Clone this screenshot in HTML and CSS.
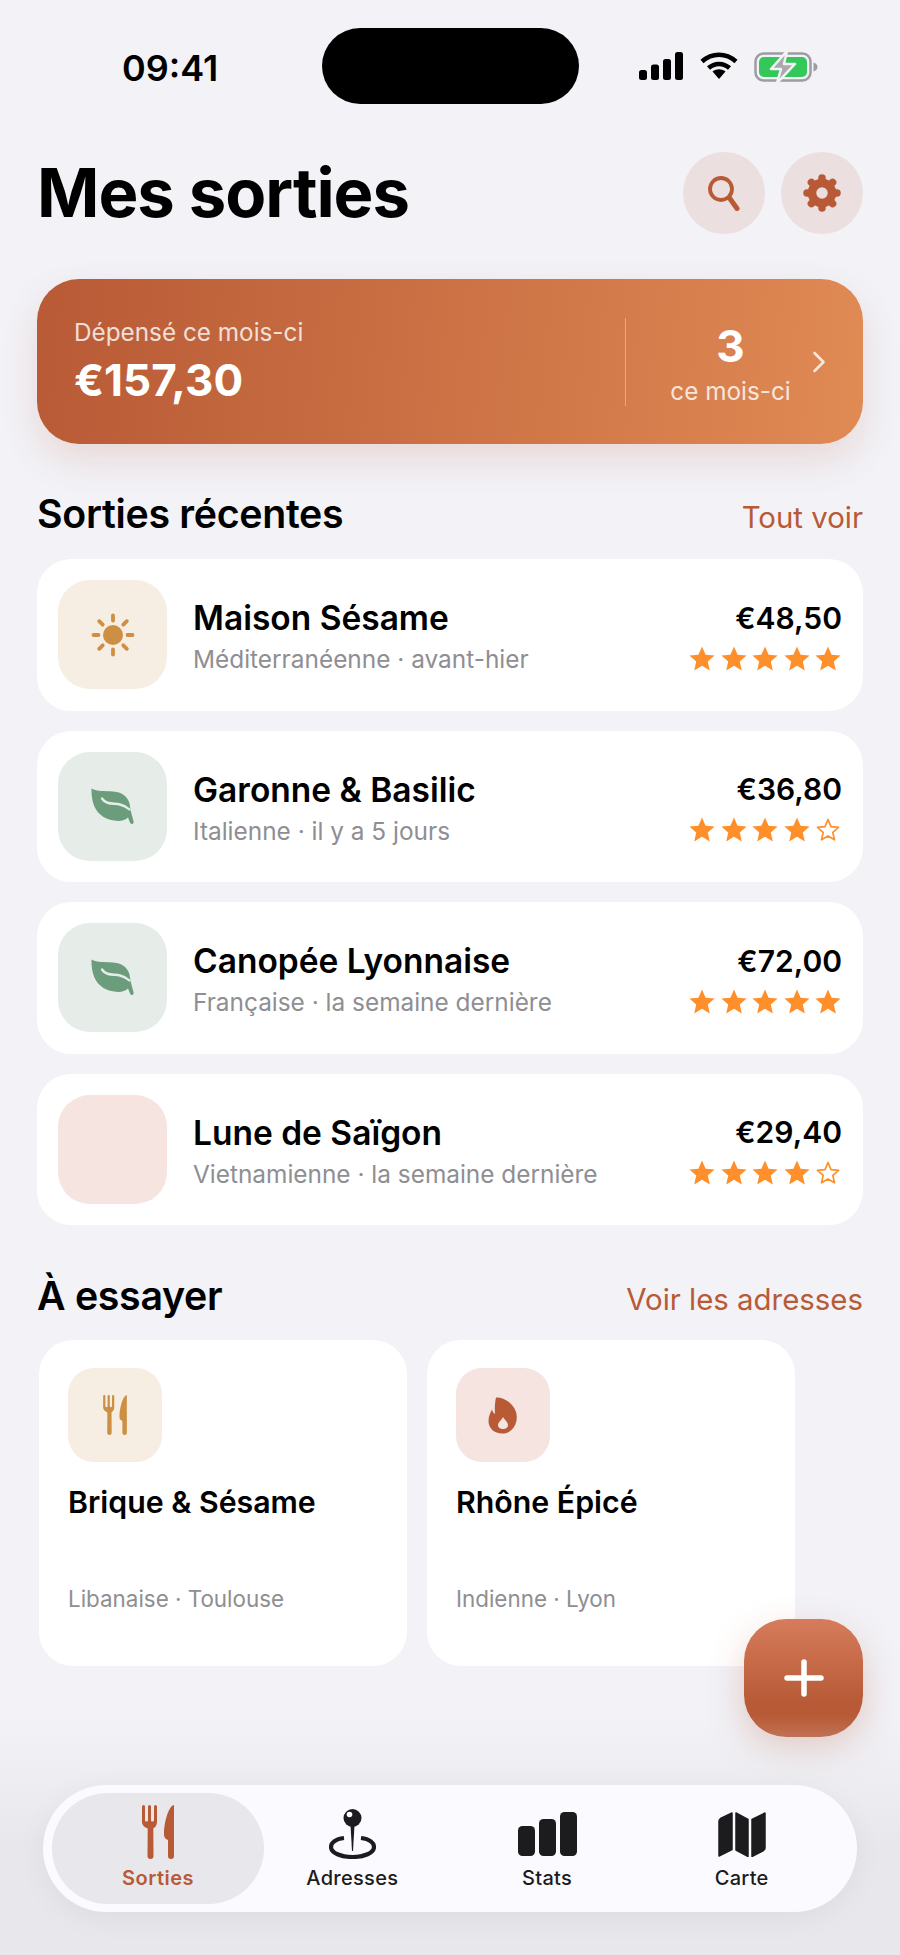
FILE: index.html
```html
<!DOCTYPE html>
<html lang="fr">
<head>
    <meta charset="UTF-8">
    <meta name="viewport" content="width=device-width, initial-scale=1.0">
    <title>Mes sorties</title>
    <link rel="stylesheet" href="styles.css">
</head>
<body>
    <svg class="defs" width="0" height="0">
        <symbol id="star" viewBox="0 0 26 25">
            <polygon points="13,0.5 16.6,8.8 25.6,9.6 18.8,15.5 20.8,24.4 13,19.7 5.2,24.4 7.2,15.5 0.4,9.6 9.4,8.8" fill="currentColor"/>
        </symbol>
        <symbol id="star-empty" viewBox="0 0 26 25">
            <polygon points="13,2.5 16,9.7 23.6,10.4 17.8,15.4 19.5,22.8 13,18.9 6.5,22.8 8.2,15.4 2.4,10.4 10,9.7" fill="none" stroke="currentColor" stroke-width="1.7" stroke-linejoin="round"/>
        </symbol>
        <symbol id="cutlery" viewBox="0 0 32 54">
            <path fill="currentColor" d="M0 1.5a1.5 1.5 0 0 1 3 0V15c0 1 .6 1.5 1.5 1.5S6 16 6 15V1.5a1.5 1.5 0 0 1 3 0V15c0 1 .6 1.5 1.5 1.5S12 16 12 15V1.5a1.5 1.5 0 0 1 3 0V17c0 3.500-2 5.500-3.700 6.500L11.500 51a3 3 0 0 1-3 3 3 3 0 0 1-3-3l.2-27.500C3 22.500 0 20.500 0 17Z"/>
            <path fill="currentColor" d="M31.500 0c.3 0 .5.3.5.8V51a3 3 0 0 1-3 3 3 3 0 0 1-3-3V35c-2.600-.8-4-2.500-4-5.500C22 18 26 3 31 .2c.2-.1.3-.2.5-.2Z"/>
        </symbol>
        <symbol id="leaf" viewBox="0 0 43 37">
            <path fill="currentColor" d="M0.500 0.500C6 3.500 14 3 22 3.500C32 4 38.500 10 39 18.500C39.500 23 41.500 29 42.500 33C43.300 36 40 37 39 34.500L37 29.500C34 32.500 29 33.500 23 32.500C10 30.500 0 22 0.500 0.500Z"/>
            <path fill="none" stroke="var(--vein)" stroke-width="2.400" stroke-linecap="round" d="M11 10.500C15 17 23 15 29 16.500C33 17.500 36 19 38.500 21.500"/>
        </symbol>
    </svg>

    <div class="screen">
        <div class="status-bar">
            <div class="status-time">09:41</div>
            <div class="island"></div>
            <div class="status-icons">
                <svg width="45" height="28" viewBox="0 0 45 28" fill="#000">
                    <rect x="0" y="18" width="8" height="10" rx="2.500"/>
                    <rect x="12" y="12.500" width="8" height="15.500" rx="2.500"/>
                    <rect x="24" y="7" width="8" height="21" rx="2.500"/>
                    <rect x="36" y="0" width="8" height="28" rx="2.500"/>
                </svg>
                <svg width="38" height="27" viewBox="0 0 38 27" fill="none" stroke="#000" stroke-width="4.500">
                    <path d="M2 9.500C12 .5 26 .5 36 9.500"/>
                    <path d="M8.500 16C14.500 10.500 23.500 10.500 29.500 16"/>
                    <path fill="#000" stroke="none" d="M12.500 19.500C16.500 16.500 21.500 16.500 25.500 19.500L19 27Z"/>
                </svg>
                <svg width="64" height="30" viewBox="0 0 64 30">
                    <rect x="1.500" y="1.500" width="55" height="27" rx="8" fill="none" stroke="#9c9ca1" stroke-width="2.500"/>
                    <path d="M59.500 10.500c2.500.8 4 2.500 4 4.500s-1.500 3.700-4 4.500Z" fill="#9c9ca1"/>
                    <rect x="5" y="5" width="48" height="20" rx="5" fill="#34c759"/>
                    <path d="M33 -1L17 17H27L23 31L41 12H30Z" fill="#a9a9ae" stroke="#f2f2f7" stroke-width="2.500" stroke-linejoin="round"/>
                </svg>
            </div>
        </div>

        <div class="page-head">
            <h1>Mes sorties</h1>
            <div class="head-actions">
                <button class="round-btn">
                    <svg width="36" height="36" viewBox="0 0 36 36" fill="none" stroke="currentColor">
                        <circle cx="15" cy="14" r="11" stroke-width="3.800"/>
                        <path d="M23.500 23L31 33.500" stroke-width="5" stroke-linecap="round"/>
                    </svg>
                </button>
                <button class="round-btn">
                    <svg width="38" height="38" viewBox="0 0 38 38" fill="none" stroke="currentColor">
                        <circle cx="19" cy="19" r="10" stroke-width="8.500"/>
                        <g stroke-width="7.500" stroke-linecap="round">
                            <path d="M19 4V7"/><path d="M19 31V34"/><path d="M4 19H7"/><path d="M31 19H34"/>
                            <path d="M8.400 8.400L10.500 10.500"/><path d="M27.500 27.500L29.600 29.600"/>
                            <path d="M8.400 29.600L10.500 27.500"/><path d="M27.500 10.500L29.600 8.400"/>
                        </g>
                    </svg>
                </button>
            </div>
        </div>

        <div class="summary">
            <div class="summary-main">
                <div class="summary-label">Dépensé ce mois-ci</div>
                <div class="summary-amount">€157,30</div>
            </div>
            <div class="summary-side">
                <div class="summary-count">3</div>
                <div class="summary-label">ce mois-ci</div>
            </div>
            <svg class="summary-chevron" width="14" height="22" viewBox="0 0 14 22" fill="none" stroke="currentColor" stroke-width="2.600" stroke-linecap="round" stroke-linejoin="round">
                <path d="M2.500 2L11.500 11L2.500 20"/>
            </svg>
        </div>

        <div class="section-head">
            <h2>Sorties récentes</h2>
            <span class="section-link">Tout voir</span>
        </div>

        <div class="outings">
            <div class="outing">
                <div class="tile tile-sand">
                    <svg width="44" height="44" viewBox="0 0 44 44" fill="none" stroke="currentColor" stroke-width="3.800" stroke-linecap="round">
                        <circle cx="22" cy="22" r="10" fill="currentColor" stroke="none"/>
                        <path d="M22 2.500V7.500"/><path d="M22 36.500V41.500"/><path d="M2.500 22H7.500"/><path d="M36.500 22H41.500"/>
                        <path d="M8.200 8.200L11.700 11.700"/><path d="M32.300 32.300L35.800 35.800"/>
                        <path d="M8.200 35.800L11.700 32.300"/><path d="M32.300 11.700L35.800 8.200"/>
                    </svg>
                </div>
                <div class="outing-info">
                    <div class="outing-name">Maison Sésame</div>
                    <div class="outing-meta">Méditerranéenne · avant-hier</div>
                </div>
                <div class="outing-side">
                    <div class="outing-price">€48,50</div>
                    <div class="stars">
                        <svg><use href="#star"/></svg><svg><use href="#star"/></svg><svg><use href="#star"/></svg><svg><use href="#star"/></svg><svg><use href="#star"/></svg>
                    </div>
                </div>
            </div>
            <div class="outing">
                <div class="tile tile-sage">
                    <svg width="43" height="37"><use href="#leaf"/></svg>
                </div>
                <div class="outing-info">
                    <div class="outing-name">Garonne &amp; Basilic</div>
                    <div class="outing-meta">Italienne · il y a 5 jours</div>
                </div>
                <div class="outing-side">
                    <div class="outing-price">€36,80</div>
                    <div class="stars">
                        <svg><use href="#star"/></svg><svg><use href="#star"/></svg><svg><use href="#star"/></svg><svg><use href="#star"/></svg><svg><use href="#star-empty"/></svg>
                    </div>
                </div>
            </div>
            <div class="outing">
                <div class="tile tile-sage">
                    <svg width="43" height="37"><use href="#leaf"/></svg>
                </div>
                <div class="outing-info">
                    <div class="outing-name">Canopée Lyonnaise</div>
                    <div class="outing-meta">Française · la semaine dernière</div>
                </div>
                <div class="outing-side">
                    <div class="outing-price">€72,00</div>
                    <div class="stars">
                        <svg><use href="#star"/></svg><svg><use href="#star"/></svg><svg><use href="#star"/></svg><svg><use href="#star"/></svg><svg><use href="#star"/></svg>
                    </div>
                </div>
            </div>
            <div class="outing">
                <div class="tile tile-rose"></div>
                <div class="outing-info">
                    <div class="outing-name">Lune de Saïgon</div>
                    <div class="outing-meta">Vietnamienne · la semaine dernière</div>
                </div>
                <div class="outing-side">
                    <div class="outing-price">€29,40</div>
                    <div class="stars">
                        <svg><use href="#star"/></svg><svg><use href="#star"/></svg><svg><use href="#star"/></svg><svg><use href="#star"/></svg><svg><use href="#star-empty"/></svg>
                    </div>
                </div>
            </div>
        </div>

        <div class="section-head section-head-try">
            <h2>À essayer</h2>
            <span class="section-link">Voir les adresses</span>
        </div>

        <div class="try-list">
            <div class="try-card">
                <div class="tile tile-small tile-sand">
                    <svg width="24" height="40"><use href="#cutlery"/></svg>
                </div>
                <div class="try-name">Brique &amp; Sésame</div>
                <div class="try-meta">Libanaise · Toulouse</div>
            </div>
            <div class="try-card">
                <div class="tile tile-small tile-rose">
                    <svg width="30" height="37" viewBox="0 0 30 37">
                        <path fill="currentColor" fill-rule="evenodd" d="M8 0.500C16 0 25 6 28 15C31 25 25 36.500 14.500 36.500C6 36.500 0.500 31 0.500 24C0.500 19 2.500 15.500 4 12.500C4.500 14.500 5.500 16 7 17C6.500 11 7 5 8 0.500ZM15 20C14 23 10 25 10 28C10 30.500 12 32 15 32C18 32 20 30.500 20 28C20 25 16.500 23 15 20Z"/>
                    </svg>
                </div>
                <div class="try-name">Rhône Épicé</div>
                <div class="try-meta">Indienne · Lyon</div>
            </div>
        </div>

        <button class="fab">
            <svg width="40" height="38" viewBox="0 0 40 38" fill="none" stroke="#fff" stroke-width="5.500" stroke-linecap="round">
                <path d="M20 3V35"/><path d="M3 19H37"/>
            </svg>
        </button>

        <div class="tab-fade"></div>
        <nav class="tabbar">
            <div class="tab tab-active">
                <svg class="tab-icon" width="32" height="54"><use href="#cutlery"/></svg>
                <span>Sorties</span>
            </div>
            <div class="tab tab-pin">
                <svg class="tab-icon" width="47" height="50" viewBox="0 0 47 50" fill="none">
                    <path d="M15 29C6 30 2 34 2 38C2 44 12 48 23.500 48C35 48 45 44 45 38C45 34 41 30 32 29" stroke="currentColor" stroke-width="4.200"/>
                    <path d="M21.500 16H25.500L24 42H23Z" fill="currentColor"/>
                    <circle cx="23.500" cy="9" r="9" fill="currentColor"/>
                    <circle cx="20.500" cy="5.500" r="2.800" fill="#fff"/>
                </svg>
                <span>Adresses</span>
            </div>
            <div class="tab">
                <svg class="tab-icon tab-icon-stats" width="59" height="44" viewBox="0 0 59 44" fill="currentColor">
                    <rect x="0" y="14" width="17" height="30" rx="4.500"/>
                    <rect x="21" y="7" width="17" height="37" rx="4.500"/>
                    <rect x="42" y="0" width="17" height="44" rx="4.500"/>
                </svg>
                <span>Stats</span>
            </div>
            <div class="tab">
                <svg class="tab-icon tab-icon-map" width="48" height="45" viewBox="0 0 48 45" fill="currentColor" stroke="currentColor" stroke-width="1.500" stroke-linejoin="round">
                    <path d="M1 9Q1 7.500 2.500 6.500L14 1V37.500L1 44Z"/>
                    <path d="M18 1L30 7.500V44.500L18 38Z"/>
                    <path d="M34 7.500L47 1V36Q47 37.500 45.500 38.500L34 44.500Z"/>
                </svg>
                <span>Carte</span>
            </div>
        </nav>
    </div>
</body>
</html>
```

FILE: styles.css
```css
:root {
    --brick: #b85a36;
    --ink: #000;
    --tab-ink: #1c1c1e;
    --muted: #8e8e93;
    --background-color: #f2f2f7;
}

* {
    box-sizing: border-box;
}

body {
    margin: 0;
    font-family: Inter, 'Liberation Sans', sans-serif;
    color: var(--ink);
    background-color: var(--background-color);
}

h1, h2 {
    margin: 0;
}

button {
    border: none;
    padding: 0;
    cursor: pointer;
    font: inherit;
}

.defs {
    position: absolute;
}

.screen {
    position: relative;
    width: 900px;
    height: 1955px;
    padding: 0 37px;
    overflow: hidden;
}

/* status bar */
.status-bar {
    display: grid;
    grid-template-columns: 1fr 257px 1fr;
    height: 76px;
    margin: 28px -37px 0;
}

.status-time {
    padding: 23px 0 0 122px;
    font-size: 36px;
    font-weight: 600;
    line-height: 34px;
}

.island {
    background: #000;
    border-radius: 38px;
}

.status-icons {
    display: flex;
    align-items: flex-start;
    gap: 16px;
    padding: 24px 0 0 60px;
}

/* header */
.page-head {
    display: flex;
    justify-content: space-between;
    align-items: center;
    margin-top: 48px;
}

h1 {
    font-size: 67px;
    font-weight: 700;
    letter-spacing: -1px;
    line-height: 82px;
}

.head-actions {
    display: flex;
    gap: 16px;
}

.round-btn {
    display: flex;
    align-items: center;
    justify-content: center;
    width: 82px;
    height: 82px;
    border-radius: 50%;
    background: #ecdfdf;
    color: var(--brick);
}

/* summary card */
.summary {
    position: relative;
    display: flex;
    align-items: center;
    height: 165px;
    margin-top: 45px;
    padding: 0 37px;
    border-radius: 42px;
    background: linear-gradient(96deg, #b85a36, #e08a54);
    box-shadow: 0 16px 36px rgba(184, 90, 54, 0.16);
    color: #fff;
}

.summary-main {
    flex: 1;
}

.summary-label {
    font-size: 24.3px;
    line-height: 30px;
    opacity: 0.8;
}

.summary-amount {
    margin-top: 6px;
    font-size: 44px;
    font-weight: 700;
    line-height: 54px;
}

.summary-side {
    width: 210px;
    height: 88px;
    margin-right: -9px;
    padding-top: 3px;
    border-left: 1.5px solid rgba(255, 255, 255, 0.35);
    text-align: center;
}

.summary-count {
    font-size: 44px;
    font-weight: 700;
    line-height: 50px;
    margin-bottom: 5px;
}

.summary-chevron {
    position: absolute;
    right: 37px;
    top: 72px;
    color: rgba(255, 255, 255, 0.8);
}

/* sections */
.section-head {
    display: flex;
    justify-content: space-between;
    align-items: baseline;
    margin-top: 46px;
    height: 69px;
}

.section-head-try {
    margin-top: 47px;
    height: 68px;
}

h2 {
    font-size: 39.3px;
    font-weight: 600;
    letter-spacing: -0.3px;
}

.section-link {
    font-size: 29.4px;
    color: var(--brick);
}

/* recent outings */
.outings {
    display: flex;
    flex-direction: column;
    gap: 20px;
}

.outing {
    display: flex;
    align-items: center;
    height: 151.5px;
    padding: 0 21px;
    border-radius: 34px;
    background: #fff;
}

.tile {
    flex: none;
    display: flex;
    align-items: center;
    justify-content: center;
    width: 109px;
    height: 109px;
    border-radius: 32px;
}

.tile-sand {
    background: #f6eee2;
    color: #cd8f43;
}

.tile-sage {
    --vein: #e6ece8;
    background: #e6ece8;
    color: #6b9c7b;
}

.tile-rose {
    background: #f5e4e0;
    color: var(--brick);
}

.tile-small {
    width: 94px;
    height: 94px;
    border-radius: 26px;
}

.outing-info {
    flex: 1;
    margin-left: 26px;
    padding-top: 3px;
}

.outing-name {
    font-size: 33.5px;
    font-weight: 560;
    line-height: 40px;
}

.outing-meta {
    margin-top: 6px;
    font-size: 24.4px;
    line-height: 30px;
    color: var(--muted);
}

.outing-side {
    display: flex;
    flex-direction: column;
    align-items: flex-end;
}

.outing-price {
    font-size: 30px;
    font-weight: 600;
    line-height: 38px;
}

.stars {
    display: flex;
    gap: 5.5px;
    margin-top: 9px;
    margin-right: 1px;
    color: #ff8f2a;
}

.stars svg {
    width: 26px;
    height: 25px;
}

/* to try */
.try-list {
    display: flex;
    gap: 20px;
    padding-left: 2px;
}

.try-card {
    width: 368px;
    height: 326px;
    padding: 28px 29px;
    border-radius: 34px;
    background: #fff;
}

.try-name {
    margin-top: 19.5px;
    font-size: 30.3px;
    font-weight: 560;
    line-height: 40px;
}

.try-meta {
    margin-top: 63.5px;
    font-size: 22.4px;
    line-height: 28px;
    color: var(--muted);
}

.fab {
    position: absolute;
    left: 744px;
    top: 1619px;
    display: flex;
    align-items: center;
    justify-content: center;
    width: 119px;
    height: 118px;
    border-radius: 42px;
    background: linear-gradient(180deg, #d67c5c 0%, #b85a36 70%);
    box-shadow: 0 14px 36px rgba(184, 90, 54, 0.28);
}

/* tab bar */
.tab-fade {
    position: absolute;
    left: 0;
    right: 0;
    bottom: 0;
    height: 240px;
    background: linear-gradient(180deg, rgba(232, 232, 236, 0), #e8e8ec 55%);
}

.tabbar {
    position: absolute;
    left: 43px;
    top: 1785px;
    display: flex;
    width: 814px;
    height: 127px;
    padding: 8px 18px 8px 9px;
    border-radius: 64px;
    background: #fbfbff;
    box-shadow: 0 6px 30px rgba(0, 0, 0, 0.05);
}

.tab {
    flex: 1;
    display: flex;
    flex-direction: column;
    align-items: center;
    justify-content: flex-end;
    padding-bottom: 14px;
    border-radius: 56px;
    color: var(--tab-ink);
}

.tab:first-child {
    flex: none;
    width: 212px;
}

.tab-pin {
    margin-left: -9px;
}

.tab-icon {
    display: block;
    margin-bottom: 7px;
}

.tab-icon-stats {
    margin-bottom: 10px;
}

.tab-icon-map {
    margin-bottom: 9px;
}

.tab span {
    font-size: 20px;
    font-weight: 500;
    line-height: 24px;
    letter-spacing: 0.3px;
}

.tab-active {
    background: #e8e8ec;
    color: var(--brick);
}

.tab-active span {
    font-weight: 600;
    letter-spacing: 0.5px;
}
```
